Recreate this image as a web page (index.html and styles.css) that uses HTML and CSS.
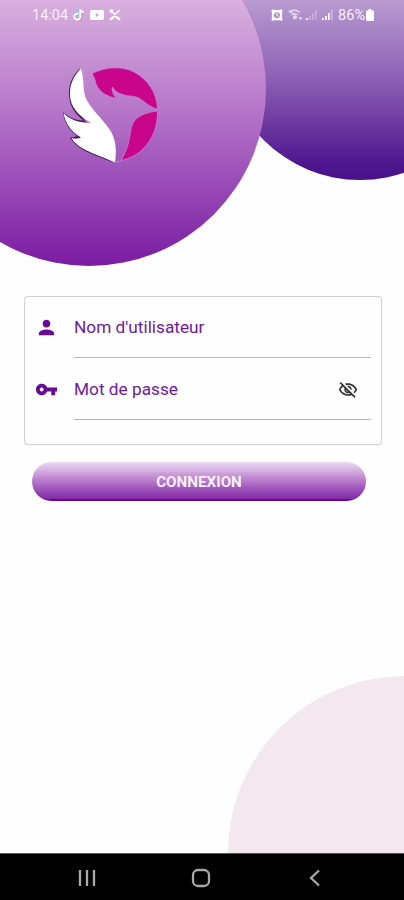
FILE: index.html
```
<!DOCTYPE html>
<html lang="fr">
<head>
<meta charset="utf-8">
<title>Connexion</title>
<link rel="stylesheet" href="styles.css">
</head>
<body>
<div class="screen">
  <svg class="backdrop" viewBox="0 0 404 853" aria-hidden="true">
    <defs>
      <linearGradient id="violet" gradientUnits="userSpaceOnUse" x1="0" y1="0" x2="0" y2="266">
        <stop offset="0" stop-color="#d8b0de"/><stop offset=".4" stop-color="#b778ca"/><stop offset="1" stop-color="#7a1ba2"/>
      </linearGradient>
      <linearGradient id="indigo" gradientUnits="userSpaceOnUse" x1="0" y1="0" x2="0" y2="180">
        <stop offset="0" stop-color="#b99bd1"/><stop offset=".45" stop-color="#8a5eb3"/><stop offset=".9" stop-color="#50188f"/><stop offset="1" stop-color="#48108b"/>
      </linearGradient>
    </defs>
    <circle cx="360" cy="44" r="136" fill="url(#indigo)"/>
    <circle cx="89" cy="89" r="177" fill="url(#violet)"/>
    <circle cx="405" cy="853" r="177" fill="#f2e8ed"/>
  </svg>

  <header class="status">
    <div class="status-left">
      <span>14:04</span>
      <svg class="tiktok" viewBox="0 0 12 14"><g fill="none" stroke-width="2"><path stroke="#55dce4" d="M5 5.500a3 3 0 1 0 1.500 3V1.500q.8 2.500 3.500 3"/><path stroke="#e86a98" d="M6 6.500a3 3 0 1 0 2 3V2.500q.8 2 3 2.500"/><path stroke="#fff" d="M5.500 6a3 3 0 1 0 1.800 3V1.500q.8 2.500 3.400 3"/></g></svg>
      <svg class="youtube" viewBox="0 0 14 10"><path fill="#fff" fill-rule="evenodd" d="M2 0h10q2 0 2 2v6q0 2-2 2H2Q0 10 0 8V2Q0 0 2 0m3.700 2.800v4.400L9.300 5z"/></svg>
      <svg class="missed" viewBox="0 0 12 12"><path fill="none" stroke="#fff" stroke-width="1.400" d="M1.500 4V1.200H4M1.800 1.500l4 4 4.700-4.300"/><path fill="#fff" d="M.2 9.800Q6 3.500 11.800 9.800l-1.600 1.800-2.700-1.500V8.700Q6 8 4.500 8.700v1.400l-2.700 1.500z"/></svg>
    </div>
    <div class="status-right">
      <svg class="alarm" viewBox="0 0 12 12"><path fill="#fff" fill-rule="evenodd" d="M.3 1.500 2 .2 3.500 1h5L10 .2l1.700 1.300-.6 1.800v6L11.700 11l-1 .8-1.700-.5H3l-1.700.5-1-.8.6-1.700v-6zM6 3.200a3 3 0 1 0 0 6 3 3 0 0 0 0-6"/><path stroke="#fff" fill="none" d="M6 4v2.500l1.700.8"/></svg>
      <svg class="wifi" viewBox="0 0 15 12"><g fill="none" stroke="#fff" stroke-width="1.300" opacity=".65"><path d="M.8 3.500Q6.500-1 12 3.500M3 6q3.500-2.800 7 0M5 8.300q1.500-1.200 3 0M1.500 1l8 8"/></g><path fill="#fff" d="m6.500 10.500-2-2h4zM11 8.500h3L12.500 11z"/></svg>
      <svg class="signal" viewBox="0 0 11 12"><path fill="#fff" d="M0 9h1.800v2H0z"/><path fill="#fff" opacity=".3" d="M3 7h1.800v4H3zM6 4h1.700v7H6zM9 1h1.600v10H9z"/></svg>
      <svg class="signal second" viewBox="0 0 11 12"><path fill="#fff" d="M0 9h1.800v2H0zM3 7h1.800v4H3zM6 4h1.700v7H6z"/><path fill="#fff" opacity=".4" d="M9 1h1.600v10H9z"/></svg>
      <span>86%</span>
      <svg class="battery" viewBox="0 0 8 12"><path fill="#fff" d="M2.500 0h3v1.500H7q1 0 1 1V11q0 1-1 1H1q-1 0-1-1V2.500q0-1 1-1h1.500z"/></svg>
    </div>
  </header>

  <svg class="logo" viewBox="0 0 120 120" role="img" aria-label="Logo">
    <path fill="#c9058c" stroke="#c98ad0" stroke-width=".7" d="M42 18.500C56 11.500 72 11 84 17c14 7.500 23 21 23.500 37-2 0-4-1-5.500-2-5-2-9-7-14-9.500-6-2-12-1-17-3.500-4-1.500-7-3.500-8.500-7-1.500 3.500 1 7.500 4 11.500C54 41 48 35 45.500 27.500 45 24 44 21.500 42 18.500z"/>
    <path fill="#c9058c" stroke="#c98ad0" stroke-width=".7" d="M107.500 56c.5 15-5 29-14.500 38-6 6-14 10-22 11.500 4-7 7-14 8.500-22 1.500-7 1-12 4.500-17 4.500-6.500 13-9 23.500-10.500z"/>
    <path fill="#49205a" d="M30 13.500C21 22 18.500 31 19 40c.5 11 6 19 14.500 25.500-9-.5-16-3.500-20.500-8.500 1 10 6 18 14 24-2.500 1-5 1.500-7 1.500 7 12 24 18 44 25L33 63 23 43z"/>
    <path fill="#fff" d="M31 13.500C22.500 22 19.500 31 20 40.500c.5 11 8 20 21 27.500-12-.5-21.500-3-27.500-10 2 11 8 19 17.500 24.500-3.500 1.500-6 1.500-9.500.5 7 12 25 16 43.500 24.500 2-12 1-24-6-34C51.500 63 43 56 37 45.500c-5-9-2-19-6-32z"/>
    <path fill="none" stroke="#c98ad0" stroke-width=".8" d="M66 107q3 0 5-1.500"/>
  </svg>

  <main class="content">
    <form class="fields">
      <label class="field">
        <svg class="icon" viewBox="0 0 24 24"><path d="M12 12c2.210 0 4-1.790 4-4s-1.790-4-4-4-4 1.790-4 4 1.790 4 4 4zm0 2c-2.670 0-8 1.340-8 4v2h16v-2c0-2.660-5.330-4-8-4z"/></svg>
        <span class="entry">Nom d'utilisateur</span>
      </label>
      <label class="field">
        <svg class="icon" viewBox="0 0 24 24"><path d="M12.650 10C11.830 7.670 9.610 6 7 6c-3.310 0-6 2.690-6 6s2.690 6 6 6c2.610 0 4.830-1.670 5.650-4H17v4h4v-4h2v-4H12.650zM7 14c-1.100 0-2-.9-2-2s.9-2 2-2 2 .9 2 2-.9 2-2 2z"/></svg>
        <span class="entry">Mot de passe
          <svg class="eye" viewBox="0 0 24 24"><path d="M12 6c3.790 0 7.170 2.130 8.820 5.500-.59 1.220-1.420 2.270-2.410 3.120l1.410 1.410c1.390-1.230 2.490-2.770 3.180-4.530C21.270 7.110 17 4 12 4c-1.270 0-2.490.2-3.640.57l1.650 1.650C10.660 6.090 11.320 6 12 6zm-1.070 1.140L13 9.210c.57.25 1.030.71 1.280 1.280l2.070 2.070c.08-.34.14-.7.14-1.070C16.500 9.010 14.480 7 12 7c-.37 0-.72.05-1.070.14zM2.010 3.870l2.680 2.680C3.060 7.830 1.770 9.530 1 11.500 2.730 15.890 7 19 12 19c1.520 0 2.980-.29 4.320-.82l3.420 3.420 1.410-1.410L3.420 2.450 2.010 3.870zm7.500 7.500l2.610 2.610c-.04.01-.08.02-.12.02-1.380 0-2.500-1.120-2.500-2.500 0-.05.01-.08.01-.13zm-3.400-3.400l1.750 1.750c-.23.55-.36 1.150-.36 1.780 0 2.480 2.020 4.500 4.500 4.500.63 0 1.230-.13 1.770-.36l.98.98c-.88.24-1.800.38-2.750.38-3.790 0-7.170-2.130-8.820-5.500.7-1.430 1.720-2.610 2.930-3.530z"/></svg>
        </span>
      </label>
    </form>
    <button class="submit" type="button">CONNEXION</button>
  </main>

  <nav class="navbar">
    <svg viewBox="0 0 20 20"><path d="M3 2v16M10 2v16M17 2v16"/></svg>
    <svg viewBox="0 0 20 20"><rect x="2" y="2" width="16" height="16" rx="5"/></svg>
    <svg viewBox="0 0 20 20"><path d="M14 2.500 6 10l8 7.500"/></svg>
  </nav>
</div>
</body>
</html>
```
FILE: styles.css
```
* { box-sizing: border-box; }
body { margin: 0; font-family: Roboto, sans-serif; background: #fefefe; }
svg { display: block; flex: none; }
.screen { position: relative; width: 404px; height: 900px; overflow: hidden; display: flex; flex-direction: column; isolation: isolate; }
.backdrop { position: absolute; left: 0; top: 0; width: 404px; height: 853px; z-index: -1; }

.status { height: 30px; padding: 0 30px 0 32px; display: flex; justify-content: space-between; align-items: center; color: #f8effb; font-size: 14.5px; }
.status-left, .status-right { display: flex; align-items: center; }
.status-left span { width: 36px; }
.tiktok { width: 12px; height: 14px; margin-left: 5px; }
.youtube { width: 14px; height: 10px; margin-left: 5px; }
.missed { width: 12px; height: 12px; margin-left: 5px; }
.alarm { width: 12px; height: 12px; }
.wifi { width: 15px; height: 12px; margin-left: 5px; }
.signal { width: 11px; height: 12px; margin-left: 3px; }
.second { margin-left: 5px; }
.status-right span { margin-left: 5px; }
.battery { width: 8px; height: 12px; margin-left: 1px; }

.logo { width: 120px; height: 120px; margin: 25px 0 0 50px; }

.content { padding: 121px 22px 0 24px; flex: 1; }
.fields { height: 149px; border: 1.5px solid #cfcfcf; box-shadow: 0 0 1px #d6d6d6; border-radius: 4px; padding: 0 10px; }
.field { display: flex; align-items: center; height: 61px; color: #6f1a9d; }
.field + .field { height: 62px; }
.icon { width: 23px; height: 23px; margin-right: 16px; fill: #6a0896; }
.entry { flex: 1; align-self: stretch; display: flex; justify-content: space-between; align-items: center; border-bottom: 1px solid #b9b9b9; font-size: 17.25px; }
.eye { width: 20px; height: 20px; margin: 2px 13px 0 0; fill: #333; }
.submit { display: block; width: 334px; height: 39px; margin: 17px 0 0 8px; border: 0; border-radius: 20px; background: linear-gradient(#eadcf0, #c894d5 35%, #a35abd 65%, #842ba8 94%, #6a0796 96%); color: #f9f1fc; font: 700 15.2px Roboto, sans-serif; }

.navbar { height: 47px; background: #000; border-top: 1px solid #555; display: flex; justify-content: space-around; align-items: center; padding: 2px 32px 0 30px; }
.navbar svg { width: 20px; height: 20px; fill: none; stroke: #a9a9a9; stroke-width: 2.300; }
```
